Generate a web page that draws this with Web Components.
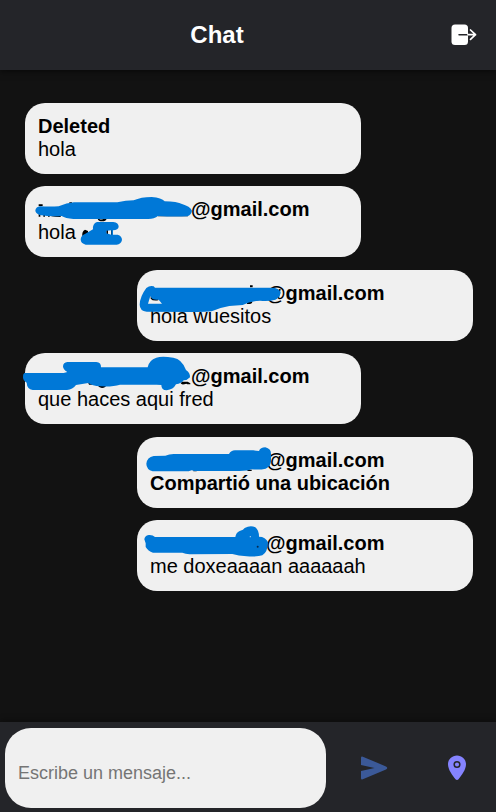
<!DOCTYPE html>
<html lang="es">
<head>
<meta charset="utf-8">
<meta name="viewport" content="width=device-width, initial-scale=1">
<title>Chat</title>
<style>
html, body { height: 100%; margin: 0; }
body { background: #121212; font-family: "Liberation Sans", Arial, sans-serif; }
</style>
</head>
<body>
<chat-app></chat-app>

<template id="app-template">
<style>
:host { display: flex; flex-direction: column; min-height: 100%; background: #121212; }
main { flex: 1; display: flex; flex-direction: column; gap: 2.5vw; padding: 33px 23px 33px 25px; }
</style>
<chat-header>Chat</chat-header>
<main>
  <chat-message><span slot="name">Deleted</span>hola</chat-message>
  <chat-message>
    <span slot="name"><name-gap size="wide"></name-gap>@gmail.com</span>hola
    <svg slot="ink" aria-hidden="true"><g transform="translate(-5 -6) scale(.33333)">
      <path fill="#000" d="M56 73h12v5H56zM148 67h8v6h-8zM56 102h5v8h-5zM70 102h5v8h-5zM84 102h5v8h-5zM94 101q8 6 16 6h12v4q-18 0-28-2zM233 112h27v4q-3 8-13 8-12 0-14-8l5 1q8 5 16-4zM414 103h90v6h-90zM187 168q-2-14 8-19l9 4v18zM259 150h5v16h-5zM273 148h5v18h-5z"/>
      <path fill="#0078d7" d="M60 79C80 80 100 80 116 79Q140 69 162 67H292Q318 61 341 61Q363 51 395 51Q425 53 434 64Q470 64 488 73Q509 79 516 92Q514 105 502 109Q460 111 414 108Q403 117 385 117H160Q136 115 125 108Q90 110 59 105Q46 100 46 91Q48 81 60 79Z"/>
      <path fill="#0078d7" fill-rule="evenodd" d="M231 126H280Q296 128 296 140Q295 150 279 151V164H293Q306 168 306 180Q303 193 290 194H197Q182 191 182 178Q183 166 196 161L219 148Q217 131 231 126ZM259 152V160L274 164V151Z"/>
    </g></svg>
  </chat-message>
  <chat-message own>
    <span slot="name"><name-gap></name-gap>@gmail.com</span>hola wuesitos
    <svg slot="ink" aria-hidden="true"><g transform="translate(-7 -5) scale(.33333)">
      <path fill="#000" d="M62 93q5 10 23 8v5q-17 3-23-5zM360 61h8v6h-8zM355 109h12q0 9-10 8h-6v-5z"/>
      <path fill="#0078d7" fill-rule="evenodd" d="M49 69Q60 60 71 64L75 68H425Q447 68 452 83Q449 98 436 104Q415 110 390 107Q360 108 338 120L298 123Q268 128 245 139Q220 142 185 141L50 140Q29 137 29 119Q30 94 49 69ZM61 93L54 116H96L86 104Q67 107 61 93Z"/>
    </g></svg>
  </chat-message>
  <chat-message>
    <span slot="name"><name-gap size="wide"></name-gap>@gmail.com</span>que haces aqui fred
    <svg slot="ink" aria-hidden="true"><g transform="translate(-5 -3) scale(.33333)">
      <path fill="#000" d="M205 99h8l5 5h-11zM234 106h25q-3 8-13 8-11-1-12-8zM414 98h6v4h-6zM486 95h17l8 5v3h-9l-3-2q-14 5-17-1z"/>
      <path fill="#0078d7" d="M13 69H131L142 66Q129 59 129 49Q130 37 142 36H229Q244 37 243 52H383Q387 30 409 23Q425 18 460 23Q486 27 498 60Q511 68 510 82Q502 91 491 91Q485 100 468 103Q460 119 440 121Q424 121 424 105L410 104H300Q278 111 241 109Q216 108 205 99L168 105Q158 119 141 120H38Q21 117 20 98Q9 92 9 82Q8 73 13 69Z"/>
    </g></svg>
  </chat-message>
  <chat-message own>
    <span slot="name"><name-gap></name-gap>@gmail.com</span><b>Compartió una ubicación</b>
    <svg slot="ink" aria-hidden="true"><g transform="translate(-7 -2) scale(.33333)">
      <path fill="#000" d="M190 106h10v3h-10zM354 104h13q-2 5-8 4h-8z"/>
      <path fill="#0078d7" d="M71 63L106 62Q119 56 136 57H297Q303 46 315 46H370L387 48Q391 37 406 37Q423 41 423 56V80Q420 95 407 101Q390 105 365 103Q350 109 320 108H194L185 106L176 109H68Q49 103 49 86Q51 67 71 63Z"/>
    </g></svg>
  </chat-message>
  <chat-message own>
    <span slot="name"><name-gap></name-gap>@gmail.com</span>me doxeaaaan aaaaaah
    <svg slot="ink" aria-hidden="true"><g transform="translate(-7 -5) scale(.33333)">
      <path fill="#0078d7" d="M43 73Q44 62 56 60Q68 59 75 66H316Q318 53 329 48Q341 45 344 39Q361 30 376 37Q387 46 387 65Q407 65 414 82Q413 112 397 121Q383 126 350 124Q325 123 307 117L179 118Q166 117 157 113H69Q54 108 47 96V85Z"/>
      <circle cx="361" cy="65" r="2" fill="#a8d2f5"/><circle cx="383" cy="95" r="3" fill="#06284c"/>
    </g></svg>
  </chat-message>
</main>
<chat-composer></chat-composer>
</template>

<script>
const define = (name, markup) => customElements.define(name, class extends HTMLElement {
  constructor() {
    super();
    this.attachShadow({ mode: "open" }).innerHTML = markup;
  }
});

define("name-gap", `
<style>
:host { display: inline-block; width: 116px; }
:host([size="wide"]) { width: 153px; }
</style>`);

define("chat-message", `
<style>
:host { position: relative; display: block; box-sizing: border-box; width: 75%; min-height: 71px;
  padding: 12px 13px; border-radius: 20px; background: #f0f0f0; color: #000;
  font-size: 20px; line-height: 23px; }
:host([own]) { align-self: flex-end; }
.name { font-weight: bold; }
::slotted(svg) { position: absolute; inset: 0; width: 100%; height: 100%; overflow: visible; pointer-events: none; }
</style>
<div class="name"><slot name="name"></slot></div>
<div><slot></slot></div>
<slot name="ink"></slot>`);

define("chat-header", `
<style>
:host { display: grid; grid-template-columns: 7fr 1fr; align-items: center; height: 70px;
  background: #242529; color: #fff; box-shadow: 0 2px 6px rgba(0,0,0,.5); }
h1 { margin: 0; font-size: 24px; line-height: 28px; text-align: center; }
button { display: grid; place-items: center; padding: 0 4px 0 0; border: 0; background: none; color: inherit; }
</style>
<h1><slot></slot></h1>
<button type="button" aria-label="Salir">
  <svg width="28" height="28" viewBox="0 0 28 28" fill="none">
    <rect x="2.500" y="3.500" width="16.500" height="20.500" rx="3.500" fill="#fff"/>
    <path d="M10 13.700H19" stroke="#242529" stroke-width="1.500" stroke-linecap="round"/>
    <path d="M19 13.700H26.500M21.500 9l5 4.700-5 4.700" stroke="#fff" stroke-width="1.700" stroke-linecap="round" stroke-linejoin="round"/>
  </svg>
</button>`);

define("chat-composer", `
<style>
:host { display: block; background: #242529; box-shadow: 0 -2px 6px rgba(0,0,0,.3); }
form { display: flex; align-items: center; padding: 6px 0 4px 5px; }
input { flex: 1; min-width: 0; box-sizing: border-box; height: 80px; margin: 0; padding: 10px 13px 0;
  border: 0; border-radius: 26px; background: #f0f0f0; color: #000; font: 18px/21px "Liberation Sans", Arial, sans-serif; }
input::placeholder { color: #757575; opacity: 1; }
.actions { display: flex; padding: 0 25px 0 34px; gap: 55px; }
button { display: block; padding: 0; border: 0; background: none; }
svg { display: block; }
</style>
<form>
  <input type="text" aria-label="Mensaje" placeholder="Escribe un mensaje...">
  <div class="actions">
    <button type="button" aria-label="Enviar">
      <svg width="28" height="26" viewBox="0 0 28 26" fill="#3b5998"><path d="M1 2.800Q1 1.200 2.800 1.700L26 11.400Q28.500 13 26 14.600L2.800 24.300Q1 24.800 1 23.200V16L14.500 13 1 10Z"/></svg>
    </button>
    <button type="button" aria-label="Compartir ubicación">
      <svg width="28" height="26" viewBox="0 0 28 26"><path fill="#8583ff" d="M14 .6c-5 0-9 3.800-9 8.700 0 5.500 4.500 11.100 7.500 15q1.500 1.400 3 0c3-3.900 7.500-9.500 7.500-15C23 4.400 19 .6 14 .6Z"/><circle cx="14" cy="9.500" r="2.800" fill="none" stroke="#242529" stroke-width="1.500"/></svg>
    </button>
  </div>
</form>`);

customElements.define("chat-app", class extends HTMLElement {
  constructor() {
    super();
    this.attachShadow({ mode: "open" }).append(document.getElementById("app-template").content.cloneNode(true));
  }
});
</script>
</body>
</html>
